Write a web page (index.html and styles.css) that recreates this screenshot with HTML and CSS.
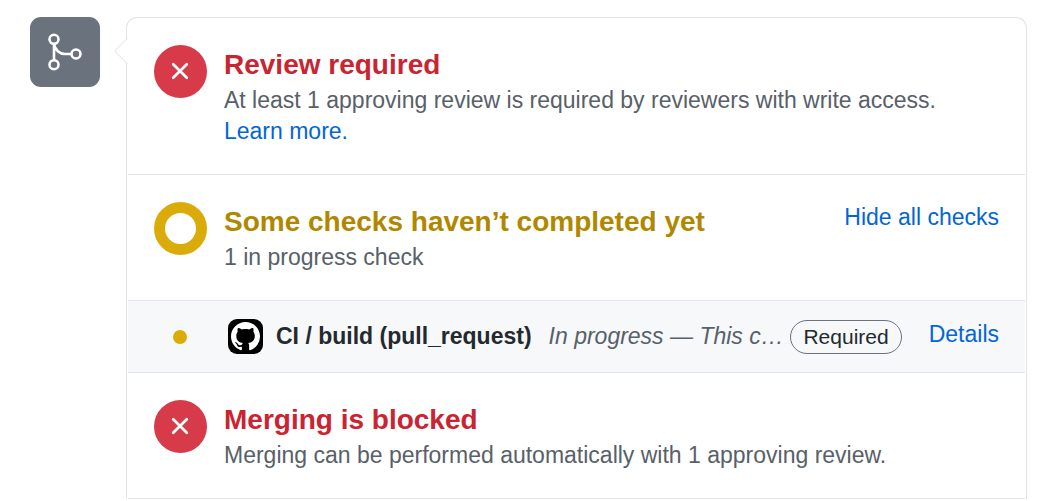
FILE: index.html
```html
<!DOCTYPE html>
<html lang="en">
<head>
<meta charset="utf-8">
<title>Merge status</title>
<link rel="stylesheet" href="styles.css">
</head>
<body>
<main class="merge">
  <div class="merge-badge">
    <svg class="merge-icon" viewBox="0 0 42 42" aria-hidden="true"><circle cx="10" cy="8.3" r="4.5"/><circle cx="10" cy="33.7" r="4.5"/><circle cx="32" cy="23" r="4.5"/><path d="M10 13V29M10 13C11 19 15.500 23 21 23H27.400"/></svg>
  </div>
  <div class="panel">
    <svg class="caret" viewBox="0 0 14 28" aria-hidden="true"><path class="caret-fill" d="M14 0.5L1 14L14 27.5Z"/><path class="caret-line" d="M13.5 1L0.7 14L13.5 27"/></svg>
    <section class="item">
      <span class="status status-error"><svg viewBox="0 0 53 53" aria-hidden="true"><path d="M19.200 19.200L32.800 32.800M32.800 19.200L19.200 32.800"/></svg></span>
      <div class="body">
        <h3 class="title title-error">Review required</h3>
        <p class="text">At least 1 approving review is required by reviewers with write access. <a class="link link-line" href="#">Learn more.</a></p>
      </div>
    </section>
    <section class="item">
      <span class="status status-pending"></span>
      <div class="body">
        <h3 class="title title-pending">Some checks haven’t completed yet</h3>
        <p class="text">1 in progress check</p>
      </div>
      <button class="link toggle" type="button">Hide all checks</button>
    </section>
    <div class="check">
      <span class="dot-cell"><span class="dot"></span></span>
      <span class="avatar"><svg viewBox="0 0 16 16" aria-hidden="true"><path d="M8 0C3.58 0 0 3.58 0 8c0 3.54 2.29 6.53 5.47 7.59.4.07.55-.17.55-.38 0-.19-.01-.82-.01-1.49-2.01.37-2.53-.49-2.69-.94-.09-.23-.48-.94-.82-1.13-.28-.15-.68-.52-.01-.53.63-.01 1.08.58 1.23.82.72 1.21 1.87.87 2.33.66.07-.52.28-.87.51-1.07-1.78-.2-3.64-.89-3.64-3.95 0-.87.31-1.59.82-2.15-.08-.2-.36-1.02.08-2.12 0 0 .67-.21 2.2.82.64-.18 1.32-.27 2-.27s1.36.09 2 .27c1.53-1.04 2.2-.82 2.2-.82.44 1.1.16 1.92.08 2.12.51.56.82 1.27.82 2.15 0 3.07-1.87 3.75-3.65 3.95.29.25.54.73.54 1.48 0 1.07-.01 1.93-.01 2.2 0 .21.15.46.55.38A8.01 8.01 0 0016 8c0-4.42-3.58-8-8-8z"/></svg></span>
      <strong class="check-name">CI / build (pull_request)</strong>
      <em class="check-note">In progress — This c…</em>
      <span class="label">Required</span>
      <a class="link details" href="#">Details</a>
    </div>
    <section class="item">
      <span class="status status-error"><svg viewBox="0 0 53 53" aria-hidden="true"><path d="M19.200 19.200L32.800 32.800M32.800 19.200L19.200 32.800"/></svg></span>
      <div class="body">
        <h3 class="title title-error">Merging is blocked</h3>
        <p class="text">Merging can be performed automatically with 1 approving review.</p>
      </div>
    </section>
  </div>
</main>
</body>
</html>
```
FILE: styles.css
```css
* {
  box-sizing: border-box;
}

body {
  margin: 0;
  overflow: hidden;
  background: #fff;
  color: #24292e;
  font: 23px/31px "Liberation Sans", Arial, sans-serif;
}

.merge {
  display: flex;
  align-items: flex-start;
  gap: 26px;
  padding: 17px 15px 0 30px;
}

.merge-badge {
  display: flex;
  flex: none;
  align-items: center;
  justify-content: center;
  width: 70px;
  height: 70px;
  border-radius: 11px;
  background: #6a737d;
}

.merge-icon {
  width: 42px;
  height: 42px;
  fill: none;
  stroke: #fff;
  stroke-width: 2.6;
}

.panel {
  position: relative;
  flex: 1;
  min-width: 0;
  padding: 0 1px;
  border: 1px solid #e1e4e8;
  border-bottom: 0;
  border-radius: 11px 11px 0 0;
}

.caret {
  position: absolute;
  top: 19px;
  left: -13px;
  width: 14px;
  height: 28px;
}

.caret-fill {
  fill: #fff;
}

.caret-line {
  fill: none;
  stroke: #dcdfe5;
}

.item {
  display: flex;
  align-items: flex-start;
  gap: 17px;
  padding: 27px 26px;
  border-bottom: 1px solid #e1e4e8;
}

.status {
  flex: none;
  width: 53px;
  height: 53px;
  border-radius: 50%;
}

.status-error {
  background: #d73a49;
}

.status-error svg {
  display: block;
  width: 100%;
  height: 100%;
  fill: none;
  stroke: #fff;
  stroke-width: 2.7;
  stroke-linecap: round;
}

.status-pending {
  border: 11px solid #dbab09;
}

.body {
  flex: 1;
  min-width: 0;
}

.title {
  margin: 0;
  font-size: 28px;
  line-height: 40px;
}

.title-error {
  color: #cb2431;
}

.title-pending {
  color: #b08800;
}

.text {
  margin: 0;
  color: #586069;
}

.link {
  color: #0366d6;
  text-decoration: none;
}

.link-line {
  display: inline-block;
}

.toggle {
  padding: 0;
  border: 0;
  background: none;
  font: inherit;
}

.check {
  display: flex;
  align-items: center;
  height: 72px;
  padding: 0 26px;
  border-bottom: 1px solid #e1e4e8;
  background: #f6f8fa;
}

.dot-cell {
  display: flex;
  flex: none;
  justify-content: center;
  width: 52px;
  margin-right: 22px;
}

.dot {
  width: 14px;
  height: 14px;
  border-radius: 50%;
  background: #dbab09;
}

.avatar {
  display: flex;
  flex: none;
  align-items: center;
  justify-content: center;
  width: 35px;
  height: 35px;
  margin-right: 13px;
  border-radius: 9px;
  background: #000;
}

.avatar svg {
  width: 29px;
  height: 29px;
  fill: #fff;
}

.check-name {
  flex: none;
  margin-right: 17px;
}

.check-note {
  flex: 1;
  min-width: 0;
  overflow: hidden;
  color: #586069;
  text-overflow: ellipsis;
  white-space: nowrap;
}

.label {
  flex: none;
  margin: 0 27px 0 2px;
  padding: 0 12px;
  border: 1px solid #6a737d;
  border-radius: 17px;
  font-size: 21px;
  line-height: 32px;
}

.details {
  flex: none;
  padding-bottom: 4px;
}
```
